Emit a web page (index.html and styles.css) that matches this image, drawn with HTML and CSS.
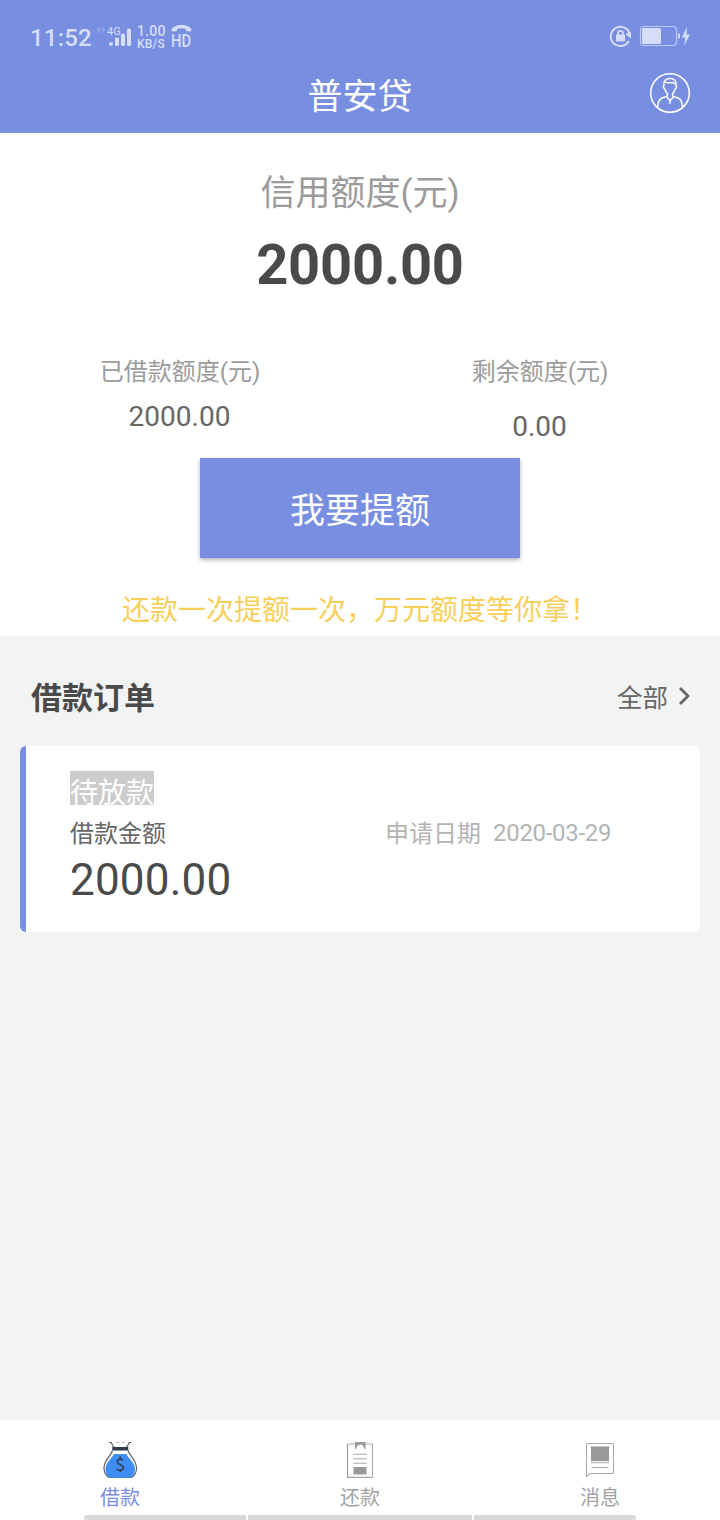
FILE: index.html
```html
<!DOCTYPE html>
<html lang="zh-CN">
<head>
<meta charset="utf-8">
<title>普安贷</title>
<link rel="stylesheet" href="styles.css">
</head>
<body>
<div class="app">
  <header class="header">
    <div class="status">
      <div class="status-left">
        <span class="time">11:52</span>
        <svg class="signal" width="37" height="30" viewBox="0 0 37 30">
          <path class="faint" d="M3 6v8L-.5 10zM5 6v8L8.500 10z"/>
          <text class="net" x="10" y="15">4G</text>
          <circle class="fill" cx="14" cy="24" r="2"/>
          <rect class="fill" x="18" y="17.500" width="4" height="8.500" rx="1.500"/>
          <rect class="fill" x="24" y="13.500" width="4" height="12.500" rx="1.500"/>
          <rect class="fill" x="30" y="8.500" width="4" height="17.500" rx="1.500"/>
        </svg>
        <div class="speed"><span class="rate">1.00</span><span class="unit">KB/S</span></div>
        <div class="hd">
          <svg width="21" height="8" viewBox="0 0 21 8"><path class="fill" d="M.5 7C0 3.500 5 1 10.500 1S21 3.500 20.500 7c-2 .8-4 .5-5.500-.3V5c-3-1.100-6-1.100-9 0v1.700C4.500 7.500 2.500 7.800.5 7z"/></svg>
          <span class="hd-text">HD</span>
        </div>
      </div>
      <svg class="status-right" width="82" height="24" viewBox="0 0 82 24">
        <path class="ring" d="M19.800 17A9.600 9.600 0 1 1 20.500 9.500"/>
        <path class="fill" d="M16.500 10l5.500-2v6.500zM8 10.500h7q1 0 1 1v5q0 1-1 1H8q-1 0-1-1v-5q0-1 1-1z"/>
        <path class="shackle" d="M9 11V9.300a2.500 2.500 0 0 1 5 0V11"/>
        <rect class="battery" x="31.500" y="2.500" width="36" height="19" rx="3.500"/>
        <rect class="fill" x="33" y="4" width="19" height="16" rx="1.500"/>
        <path class="fill" d="M69 9.500h1q1 0 1 1v3q0 1-1 1h-1zM78 2.500l-5 11h3.500L75 22l6-11.500h-3.500z"/>
      </svg>
    </div>
    <div class="titlebar">
      <h1 class="title">普安贷</h1>
      <svg class="avatar" width="42" height="42" viewBox="0 0 42 42">
        <circle cx="21" cy="21" r="19.300"/>
        <path d="M8.700 35c.2-5.500 1.500-8 4.300-9l4.500-1.600c1-.5 1.300-1.500 1-2.600-1.600-1.500-2.300-3-2.700-5-1.700-1-1.600-2.800-.8-3.700-.6-4.200 1.800-6.600 6-6.600s6.600 2.400 6 6.600c.8.900.9 2.700-.8 3.700-.4 2-1.100 3.500-2.700 5-.3 1.100 0 2.100 1 2.600L29 26c3 1 4.300 3.500 4.500 9"/>
        <path d="M16 9.800c3 2 6.500.3 8.500.9.900.4 1.100 1.200 1.300 1.800M17.500 24.500l3.500 4.200 3.800-4.200M21 28.700v3"/>
      </svg>
    </div>
  </header>

  <section class="credit">
    <div class="credit-label">信用额度(元)</div>
    <div class="credit-value">2000.00</div>
    <div class="split">
      <div class="split-item">
        <div class="split-label">已借款额度(元)</div>
        <div class="split-value">2000.00</div>
      </div>
      <div class="split-item">
        <div class="split-label">剩余额度(元)</div>
        <div class="split-value lower">0.00</div>
      </div>
    </div>
    <button class="raise">我要提额</button>
    <p class="promo">还款一次提额一次，万元额度等你拿！</p>
  </section>

  <main class="orders">
    <div class="orders-head">
      <h2 class="orders-title">借款订单</h2>
      <a class="all">全部<svg width="14" height="20" viewBox="0 0 14 20"><path d="M2 2l8 8-8 8"/></svg></a>
    </div>
    <article class="order">
      <span class="tag">待放款</span>
      <div class="order-row">
        <span class="order-label">借款金额</span>
        <span class="order-date"><span>申请日期</span><span class="date">2020-03-29</span></span>
      </div>
      <div class="order-amount">2000.00</div>
    </article>
  </main>

  <nav class="tabs">
    <div class="tab active">
      <svg class="tab-icon" width="36" height="36" viewBox="0 0 36 36">
        <path class="bag-line" d="M7 .5h2l2.500 4M29.500.5h-2l-2.500 4M10.500 8.500C9.500 13 2 18 2 26c0 4 1.800 7.500 5 9.500h22.500c3.200-2 5-5.500 5-9.500 0-8-7.500-13-8.500-17.500"/>
        <path class="bag-dots" d="M14.500.5h1.500M20.500.5h1.500"/>
        <path class="bag-fill" d="M12 12h12.500c1.500 4 8.500 8.500 8.500 15 0 4-1.500 7-4.500 9H8c-3-2-4.500-5-4.500-9 0-6.500 7-11 8.500-15z"/>
        <path class="bag-tie" d="M10.300 4.500q8 1 16 0v4h-16z"/>
        <path class="bag-dollar" d="M21 18.500c-1-2-5.700-1.800-5.700 1.100 0 3.400 5.900 2.700 5.900 6.200 0 3.200-5.200 3.200-6.400.8M18.200 14.500v2.500M18.200 27.800v2.500"/>
      </svg>
      <span class="tab-label">借款</span>
    </div>
    <div class="tab">
      <svg class="tab-icon" width="36" height="36" viewBox="0 0 36 36">
        <path class="gray-line" d="M5.500 2h25v33.400h-25z"/>
        <path class="gray-fill" d="M5 2h1v34H5zM13 0h10.500v7h-1.200c-.4-3-1.800-4.500-4-4.500s-3.700 1.500-4.100 4.500H13zM11.500 25h13v7.500h-13z"/>
        <path class="gray-line" d="M11.300 12.300h13.500M11.300 16.700h13.500M11.300 21.300h13.500"/>
      </svg>
      <span class="tab-label">还款</span>
    </div>
    <div class="tab">
      <svg class="tab-icon" width="36" height="36" viewBox="0 0 36 36">
        <path class="gray-line" d="M4.500 34.500V2.500q0-1 1-1H30.500q1 0 1 1v28q0 1-1 1H8z"/>
        <path class="gray-fill" d="M9 4.500h18v14.700H9z"/>
        <path class="gray-line" d="M9 20.700h18M9.500 25.500h17"/>
      </svg>
      <span class="tab-label">消息</span>
    </div>
    <div class="gesture"><i></i><i></i><i></i></div>
  </nav>
</div>
</body>
</html>
```

FILE: styles.css
```css
* { box-sizing: border-box; }
body, h1, h2, p { margin: 0; }
body {
  font-family: Roboto, "Noto Sans CJK SC", sans-serif;
  color: #4a4a4a;
}
svg { display: block; flex: none; }
.app {
  display: flex;
  flex-direction: column;
  width: 720px;
  height: 1520px;
  overflow: hidden;
  background: #f2f4f4;
}
.fill { fill: #d6ddf6; }
.header { height: 133px; background: #788fe1; color: #fff; }
.status {
  display: flex;
  justify-content: space-between;
  height: 66px;
  padding: 20px 29px 0 30px;
  color: #d6ddf6;
}
.status-left { display: flex; }
.time { width: 67px; font-size: 24px; font-weight: 500; line-height: 36px; letter-spacing: .2px; }
.faint { fill: #90a3e7; }
.net { font-size: 11px; font-weight: 400; fill: #d6ddf6; }
.speed { display: flex; flex-direction: column; width: 37px; padding: 5px 0 0 3px; font-weight: 500; }
.rate { font-size: 14px; line-height: 13px; letter-spacing: .2px; }
.unit { font-size: 12px; line-height: 12px; letter-spacing: .2px; }
.hd { width: 30px; padding-top: 4px; }
.hd-text {
  display: block;
  width: 30px;
  font-size: 18px;
  font-weight: 500;
  line-height: 18px;
  transform: scaleX(.82);
  transform-origin: left;
}
.status-right { margin-top: 4px; }
.ring { fill: none; stroke: #d6ddf6; stroke-width: 2; }
.shackle { fill: none; stroke: #d6ddf6; stroke-width: 1.8; }
.battery { fill: none; stroke: #bcc8f0; stroke-width: 1.2; }
.titlebar {
  display: grid;
  grid-template-columns: 42px 1fr 42px;
  align-items: center;
  height: 54px;
  padding: 0 29px;
}
.title { grid-column: 2; font-size: 35px; font-weight: 400; line-height: 54px; text-align: center; padding-top: 5px; }
.avatar { margin-top: -6px; fill: none; stroke: #fff; stroke-width: 1.5; stroke-linejoin: round; }

.credit {
  display: flex;
  flex-direction: column;
  align-items: center;
  height: 503px;
  padding-top: 36px;
  background: #fff;
}
.credit-label { font-size: 35px; line-height: 50px; color: #9b9b9b; }
.credit-value { margin-top: 11px; font-size: 56px; font-weight: 700; line-height: 70px; letter-spacing: -.2px; }
.split { display: flex; width: 100%; height: 103px; margin-top: 55px; text-align: center; }
.split-item { flex: 1; }
.split-label { font-size: 24px; line-height: 34px; color: #9b9b9b; }
.split-value { margin-top: 9px; padding-right: 1px; font-size: 28px; line-height: 38px; color: #666; }
.lower { margin-top: 19px; }
.raise {
  width: 320px;
  height: 100px;
  padding: 8px 0 0;
  border: 0;
  background: #788fe1;
  box-shadow: 0 2px 4px rgba(0, 0, 0, .3);
  color: #fff;
  font: 35px/50px Roboto, "Noto Sans CJK SC", sans-serif;
}
.promo { margin-top: 33px; font-size: 28px; line-height: 40px; color: #f8cf5a; white-space: nowrap; }

.orders { flex: 1; }
.orders-head {
  display: flex;
  align-items: center;
  justify-content: space-between;
  height: 110px;
  padding: 14px 28px 0 31px;
}
.orders-title { padding-top: 2px; font-size: 31px; font-weight: 700; line-height: 44px; }
.all { display: flex; align-items: center; gap: 10px; font-size: 25.5px; line-height: 40px; color: #666; }
.all svg { margin-top: -4px; }
.all path { fill: none; stroke: #666; stroke-width: 2.8; }
.order {
  height: 186px;
  margin: 0 20px;
  padding: 25px 0 0 44px;
  background: #fff;
  border-left: 6px solid #788fe1;
  border-radius: 6px;
}
.tag { display: block; width: 84px; height: 34px; background: #ccc; color: #fff; font-size: 28px; line-height: 45px; }
.order-row { display: flex; margin-top: 12px; font-size: 24px; line-height: 34px; }
.order-label { width: 315px; color: #666; }
.order-date { display: flex; gap: 12px; color: #b4b4b4; }
.date { margin-top: -1px; letter-spacing: -.3px; }
.order-amount { margin-top: 2px; font-size: 44px; line-height: 54px; letter-spacing: .2px; }

.tabs { display: grid; grid-template-columns: repeat(3, 1fr); height: 100px; padding-top: 22px; background: #fff; }
.tab { display: flex; flex-direction: column; align-items: center; height: 73px; color: #a2a2a2; }
.active { color: #788fe1; }
.tab-label { margin-top: 6px; font-size: 20px; line-height: 29px; }
.gray-line { fill: none; stroke: #aaa; stroke-width: 1.1; }
.gray-fill { fill: #999; }
.bag-line { fill: none; stroke: #59616b; stroke-width: 1.2; }
.bag-dots { fill: none; stroke: #888; }
.bag-fill { fill: #3e8df5; }
.bag-tie { fill: #303c4d; }
.bag-dollar { fill: none; stroke: #303c4d; stroke-width: 1.6; }
.gesture { grid-column: 1 / -1; display: grid; grid-template-columns: 162px 224px 162px; gap: 2px; height: 5px; padding-left: 84px; }
.gesture i { background: #d8d8d8; }
.gesture i:first-child { border-radius: 3px 0 0 3px; }
.gesture i:last-child { border-radius: 0 3px 3px 0; }
```
